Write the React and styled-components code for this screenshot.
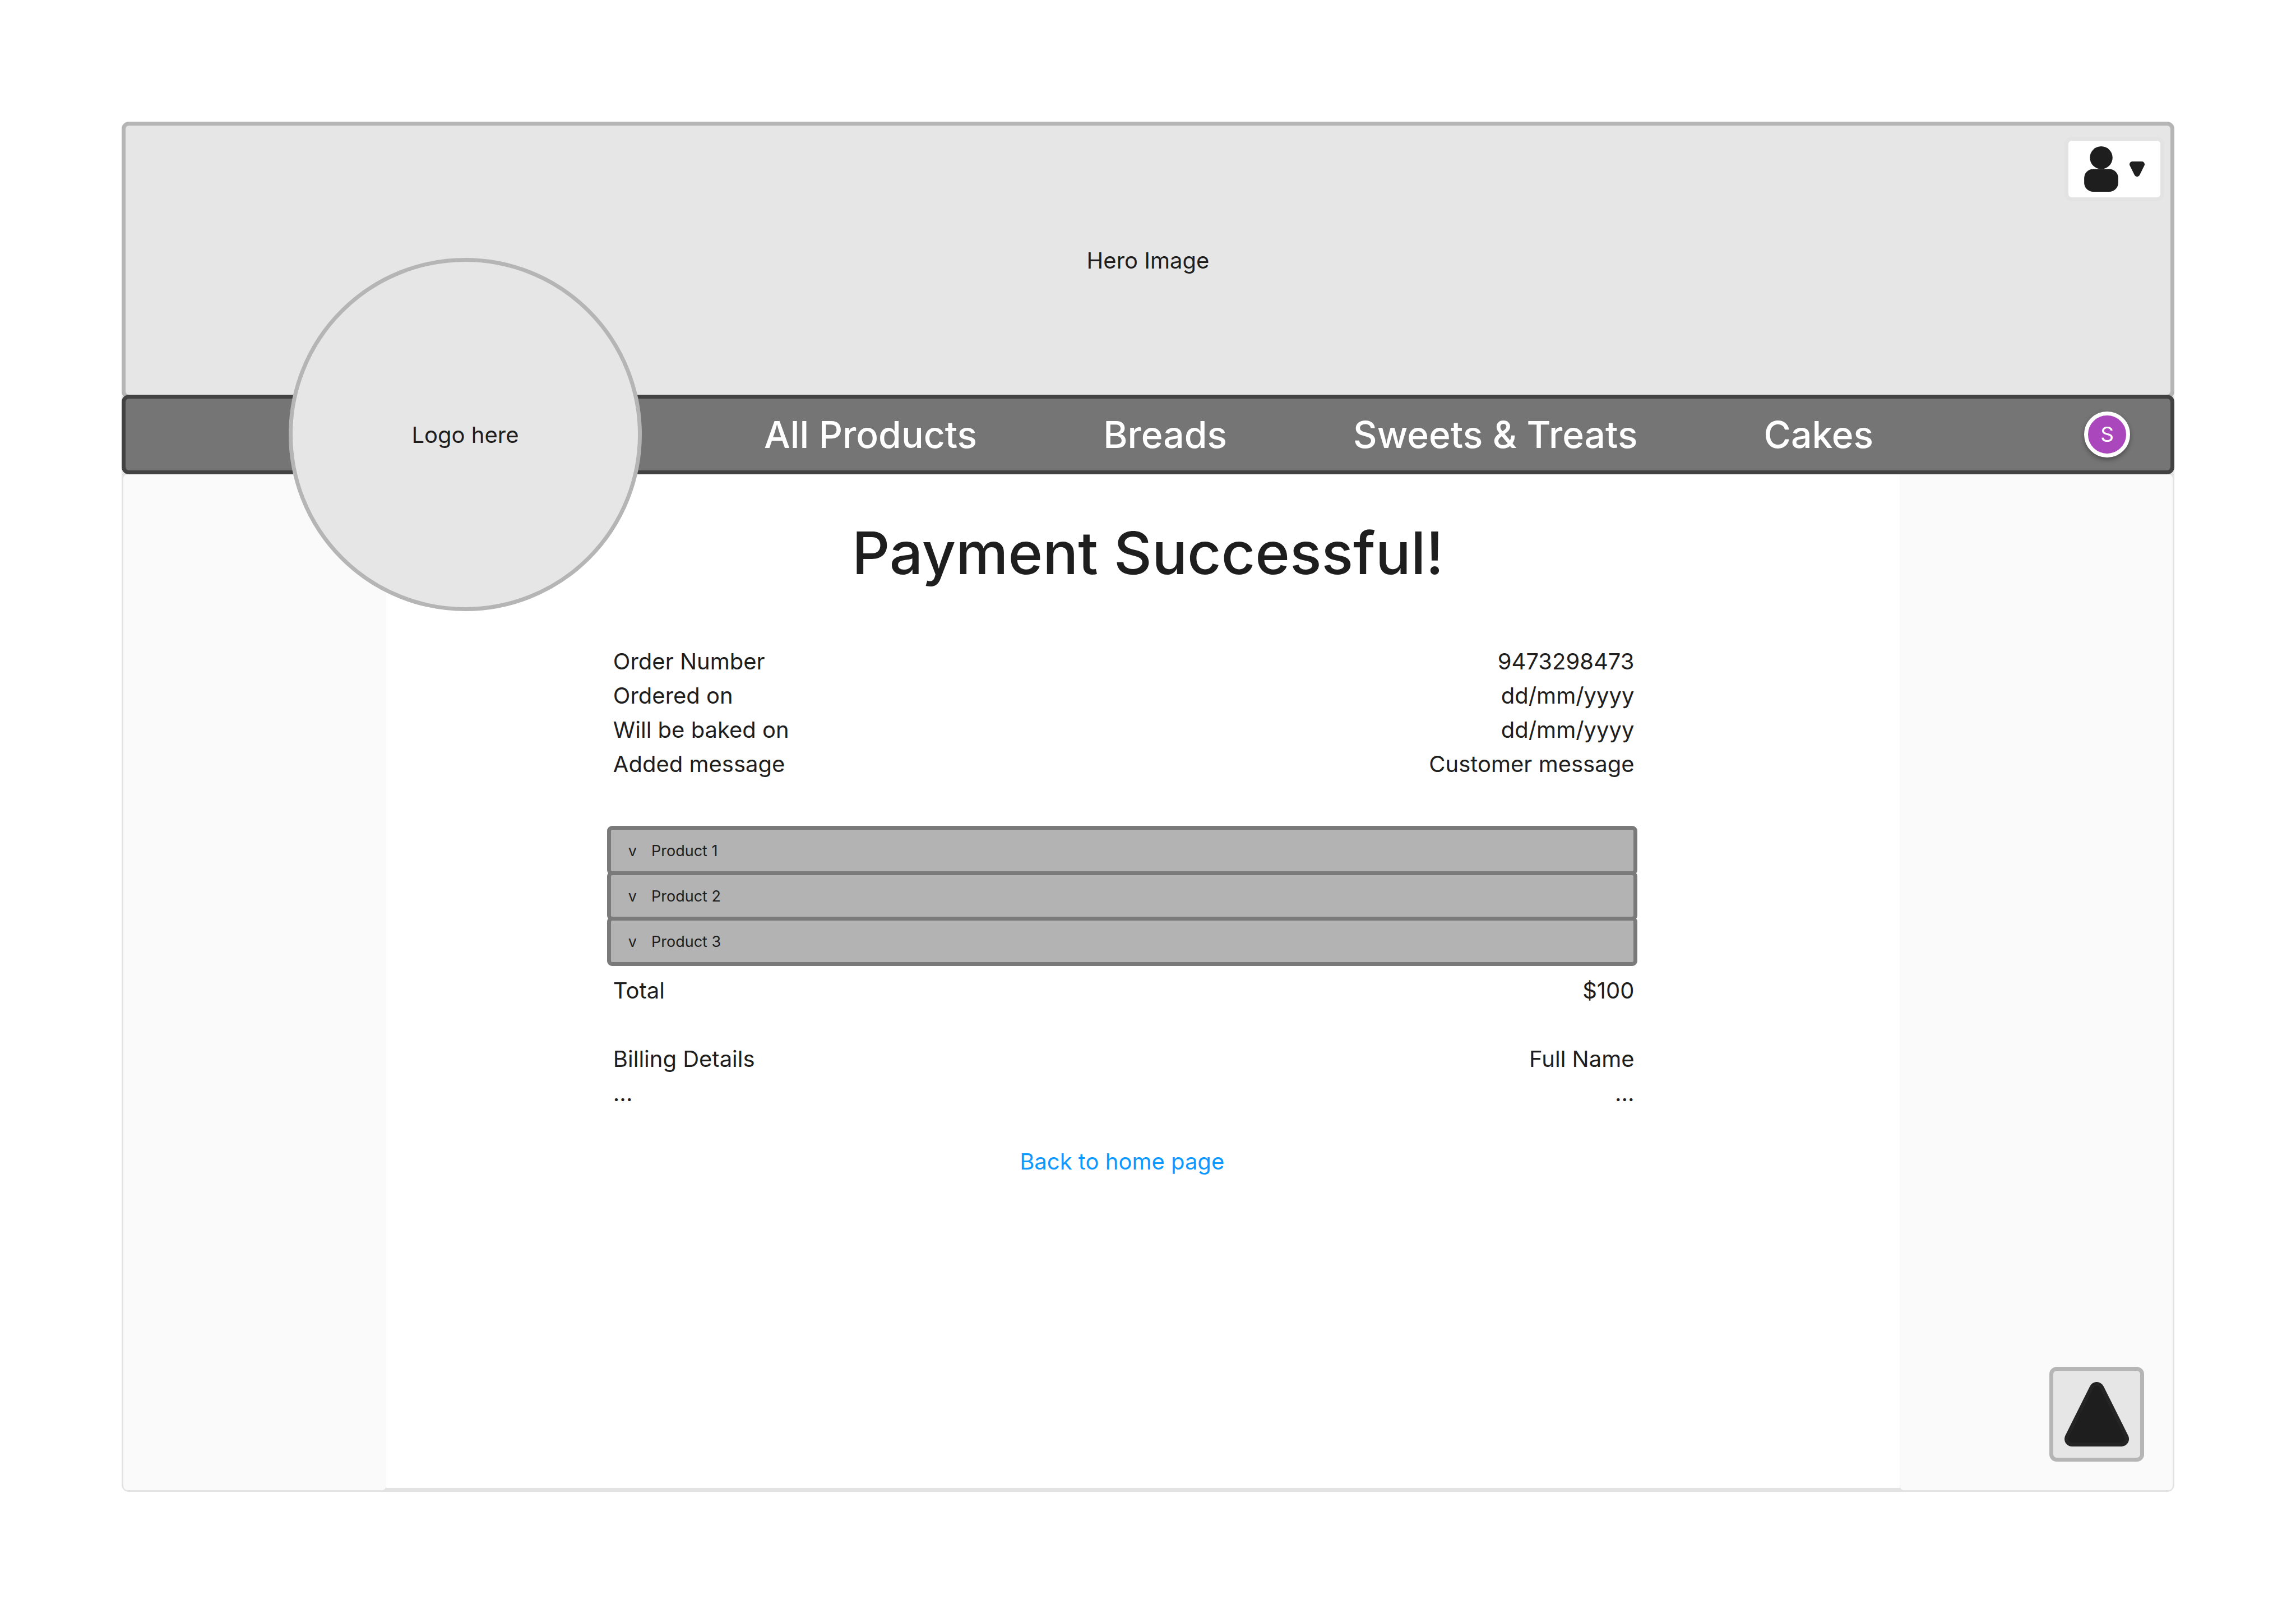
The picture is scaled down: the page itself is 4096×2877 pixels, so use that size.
import React from "react";
import styled, { createGlobalStyle } from "styled-components";

const GlobalStyle = createGlobalStyle`
  *, *::before, *::after { box-sizing: border-box; }
  body {
    margin: 0;
    background: #ffffff;
    color: #1e1e1e;
    font-family: Inter, "Liberation Sans", sans-serif;
    font-size: 40px;
    font-weight: 400;
    line-height: 61px;
  }
  h1, p, ul, dl, dd { margin: 0; padding: 0; }
  button { font: inherit; color: inherit; margin: 0; padding: 0; cursor: pointer; }
  a { text-decoration: none; }
  svg { display: block; }
`;

const Page = styled.div`
  display: flex;
  min-height: 100vh;
  padding: 217px 217px 216px;
`;

const Frame = styled.div`
  flex: 1;
  display: flex;
  flex-direction: column;
  border-radius: 13px;
  background: #e3e3e3;
`;

const Hero = styled.header`
  position: relative;
  display: flex;
  align-items: center;
  justify-content: center;
  height: 494px;
  margin-bottom: -7px;
  border: 7px solid #b5b5b5;
  border-radius: 13px;
  background: #e6e6e6;
`;

const AccountMenu = styled.button`
  position: absolute;
  top: 20px;
  right: 11px;
  display: flex;
  align-items: center;
  justify-content: center;
  gap: 20px;
  width: 178px;
  height: 115px;
  border: 7px solid #e3e3e3;
  border-radius: 13px;
  background: #ffffff;
`;

const NavBar = styled.nav`
  position: relative;
  display: flex;
  align-items: center;
  justify-content: space-between;
  height: 142px;
  padding: 0 72px 0 1139px;
  border: 7px solid #424242;
  border-radius: 13px;
  background: #757575;
`;

const Logo = styled.a`
  position: absolute;
  top: 50%;
  left: 291px;
  display: flex;
  align-items: center;
  justify-content: center;
  width: 630px;
  height: 630px;
  margin-top: -315px;
  border: 7px solid #b5b5b5;
  border-radius: 50%;
  background: #e6e6e6;
  color: #1e1e1e;
`;

const NavLinks = styled.ul`
  display: flex;
  gap: 225px;
  list-style: none;
`;

const NavLink = styled.a`
  color: #ffffff;
  font-size: 66px;
  font-weight: 500;
  line-height: 82px;
`;

const Avatar = styled.button`
  display: flex;
  align-items: center;
  justify-content: center;
  width: 82px;
  height: 82px;
  border: 7px solid #ffffff;
  border-radius: 50%;
  background: #ab47bc;
  box-shadow: 0 4px 8px rgba(0, 0, 0, 0.35);
  && { color: #ffffff; font-size: 37px; line-height: 44px; }
`;

const Columns = styled.div`
  flex: 1;
  display: grid;
  grid-template-columns: 554fr 3190fr 576fr;
  margin: 0 3px 3px;
`;

const SidePanel = styled.aside`
  display: flex;
  align-items: flex-end;
  justify-content: flex-end;
  padding: 51px;
  border-radius: ${({ $side }) => ($side === "left" ? "8px 0 8px 8px" : "0 8px 8px 8px")};
  background: #fafafa;
`;

const Main = styled.main`
  margin-bottom: 4px;
  padding-top: 75px;
  background: #ffffff;
`;

const Title = styled.h1`
  padding-left: 18px;
  font-size: 105px;
  font-weight: 500;
  line-height: 130px;
  text-align: center;
`;

const Order = styled.section`
  display: flex;
  flex-direction: column;
  margin: 98px 468px 0 394px;
`;

const Details = styled.dl`
  padding: 0 5px 0 11px;
`;

const DetailRow = styled.div`
  display: flex;
  justify-content: space-between;
`;

const Products = styled.ul`
  display: flex;
  flex-direction: column;
  margin: 80px 0 13px;
  list-style: none;
`;

const ProductItem = styled.li`
  & + & { margin-top: -7px; }
`;

const ProductButton = styled.button`
  display: flex;
  align-items: center;
  gap: 26px;
  width: 100%;
  height: 88px;
  border: 7px solid #7a7a7a;
  border-radius: 9px;
  background: #b3b3b3;
  && { padding: 0 31px; font-size: 27px; line-height: 33px; }
`;

const Billing = styled(Details)`
  margin: 61px 0;
`;

const HomeLink = styled.a`
  align-self: center;
  color: #0d99ff;
`;

const ScrollTop = styled.button`
  display: flex;
  align-items: center;
  justify-content: center;
  width: 169px;
  height: 169px;
  border: 7px solid #b5b5b5;
  border-radius: 13px;
  background: #e6e6e6;
`;

const categories = ["All Products", "Breads", "Sweets & Treats", "Cakes"];

const orderDetails = [
  ["Order Number", "9473298473"],
  ["Ordered on", "dd/mm/yyyy"],
  ["Will be baked on", "dd/mm/yyyy"],
  ["Added message", "Customer message"],
];

const products = ["Product 1", "Product 2", "Product 3"];

const billingDetails = [
  ["Billing Details", "Full Name"],
  ["...", "..."],
];

function UserIcon() {
  return (
    <svg width="61" height="81" viewBox="0 0 72 96" fill="#1e1e1e" aria-hidden="true">
      <circle cx="36" cy="24" r="24" />
      <rect y="48" width="72" height="48" rx="19" />
    </svg>
  );
}

function CaretIcon() {
  return (
    <svg width="27" height="27" viewBox="0 0 32 32" aria-hidden="true">
      <path d="M6 6H26L16 26Z" fill="#1e1e1e" stroke="#1e1e1e" strokeWidth="12" strokeLinejoin="round" />
    </svg>
  );
}

function UpIcon() {
  return (
    <svg width="115" height="115" viewBox="0 0 136 136" strokeLinejoin="round" aria-hidden="true">
      <path d="M68 16L120 120H16Z" fill="#242424" stroke="#242424" strokeWidth="32" />
      <path d="M68 16L120 120H16Z" fill="#1e1e1e" stroke="#1e1e1e" strokeWidth="16" />
    </svg>
  );
}

function Rows({ items }) {
  return items.map(([label, value]) => (
    <DetailRow key={label}>
      <dt>{label}</dt>
      <dd>{value}</dd>
    </DetailRow>
  ));
}

export default function App() {
  return (
    <>
      <GlobalStyle />
      <Page>
        <Frame>
          <Hero>
            <p>Hero Image</p>
            <AccountMenu type="button" aria-label="Account menu">
              <UserIcon />
              <CaretIcon />
            </AccountMenu>
          </Hero>
          <NavBar>
            <Logo href="#home">Logo here</Logo>
            <NavLinks>
              {categories.map((name) => (
                <li key={name}>
                  <NavLink href="#products">{name}</NavLink>
                </li>
              ))}
            </NavLinks>
            <Avatar type="button">S</Avatar>
          </NavBar>
          <Columns>
            <SidePanel $side="left" />
            <Main>
              <Title>Payment Successful!</Title>
              <Order>
                <Details>
                  <Rows items={orderDetails} />
                </Details>
                <Products>
                  {products.map((name) => (
                    <ProductItem key={name}>
                      <ProductButton type="button">
                        <span>v</span>
                        <span>{name}</span>
                      </ProductButton>
                    </ProductItem>
                  ))}
                </Products>
                <Details>
                  <Rows items={[["Total", "$100"]]} />
                </Details>
                <Billing>
                  <Rows items={billingDetails} />
                </Billing>
                <HomeLink href="#home">Back to home page</HomeLink>
              </Order>
            </Main>
            <SidePanel $side="right">
              <ScrollTop type="button" aria-label="Back to top">
                <UpIcon />
              </ScrollTop>
            </SidePanel>
          </Columns>
        </Frame>
      </Page>
    </>
  );
}
